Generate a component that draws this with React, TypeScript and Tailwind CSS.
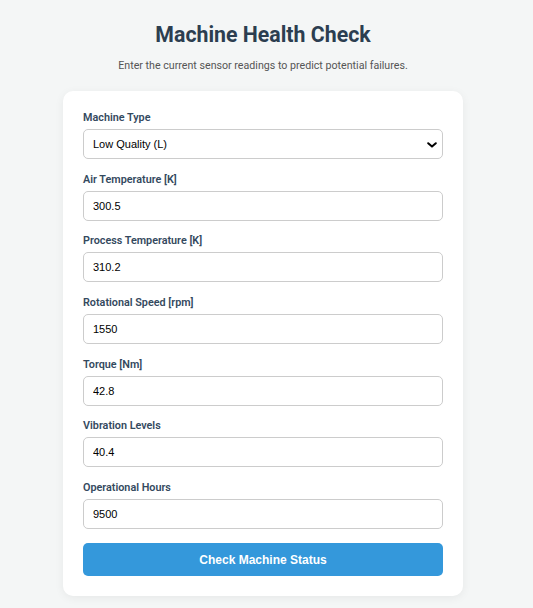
import React from "react";

const fields = [
  { label: "Air Temperature [K]", value: "300.5" },
  { label: "Process Temperature [K]", value: "310.2" },
  { label: "Rotational Speed [rpm]", value: "1550" },
  { label: "Torque [Nm]", value: "42.8" },
  { label: "Vibration Levels", value: "40.4" },
  { label: "Operational Hours", value: "9500" },
];

const labelCls =
  "block text-[10.8px] leading-[14px] font-semibold text-[#34495e] mb-[4px] font-['Roboto',sans-serif]";
const inputCls =
  "block w-full h-[30px] rounded-[5px] border border-[#cccccc] bg-white px-[9px] text-[11px] text-black font-['Liberation_Sans',Arial,sans-serif] outline-none";

export default function App() {
  return (
    <div className="min-h-[608px] w-full bg-[#f4f6f6] pr-[7px] font-['Roboto',sans-serif]">
      <div className="flex flex-col items-center pt-[21px]">
        <h1 className="text-[21.3px] leading-[28px] font-bold text-[#2c3e50]">
          Machine Health Check
        </h1>
        <p className="mt-[10px] text-[10.67px] leading-[14px] text-[#555555]">
          Enter the current sensor readings to predict potential failures.
        </p>

        <div className="mt-[18px] w-[400px] rounded-[10px] bg-white p-5 shadow-[0_2px_10px_rgba(0,0,0,0.06)]">
          <form className="flex flex-col gap-[13.7px]" onSubmit={(e) => e.preventDefault()}>
            <div>
              <label className={labelCls}>Machine Type</label>
              <div className="relative">
                <select
                  defaultValue="L"
                  className={inputCls + " appearance-none"}
                >
                  <option value="L">Low Quality (L)</option>
                  <option value="M">Medium Quality (M)</option>
                  <option value="H">High Quality (H)</option>
                </select>
                <svg
                  className="pointer-events-none absolute right-[6px] top-[13px]"
                  width="10"
                  height="6"
                  viewBox="0 0 10 6"
                >
                  <path
                    d="M1.2 1.2 L5 4.6 L8.8 1.2"
                    fill="none"
                    stroke="#000"
                    strokeWidth="2"
                    strokeLinecap="round"
                    strokeLinejoin="round"
                  />
                </svg>
              </div>
            </div>

            {fields.map((f) => (
              <div key={f.label}>
                <label className={labelCls}>{f.label}</label>
                <input type="text" defaultValue={f.value} className={inputCls} />
              </div>
            ))}

            <button
              type="submit"
              className="mt-[0.5px] h-[33px] w-full rounded-[5px] bg-[#3498db] text-[12px] font-bold text-white font-['Liberation_Sans',Arial,sans-serif]"
            >
              Check Machine Status
            </button>
          </form>
        </div>
      </div>
    </div>
  );
}
